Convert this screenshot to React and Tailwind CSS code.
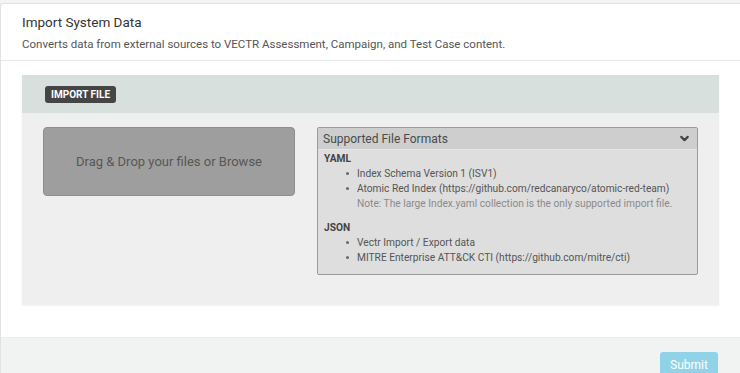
import { ChevronDown } from "lucide-react";

const Bullet = ({ children }) => (
  <li className="flex items-center">
    <span className="mr-[8px] h-[3px] w-[3px] shrink-0 rounded-full bg-[#666]" />
    <span>{children}</span>
  </li>
);

const App = () => {
  return (
    <div className="h-[373px] w-[740px] overflow-hidden bg-[#f4f4f4] pt-[3px] font-['Roboto',sans-serif]">
      <div className="flex h-full flex-col rounded-tl-[3px] border-l border-t border-[#e2e2e2] bg-white">
        {/* Header */}
        <div className="h-[57px] shrink-0 border-b border-[#e8e8e8] px-[21px] pt-[8px]">
          <h3 className="text-[13.5px] leading-[20px] text-[#333]">Import System Data</h3>
          <p className="mt-[5px] text-[11.5px] leading-[14px] text-[#555]">
            Converts data from external sources to VECTR Assessment, Campaign, and Test Case content.
          </p>
        </div>

        {/* Body */}
        <div className="shrink-0 px-[21px] pt-[14px]">
          <div className="w-[697px] shadow-[0_1px_2px_rgba(0,0,0,0.06)]">
            <div className="flex h-[38px] items-center bg-[#d8e0dd] px-[23px]">
              <span className="rounded-[3px] bg-[#454545] px-[6px] text-[10px] font-bold leading-[17px] text-white">
                IMPORT FILE
              </span>
            </div>
            <div className="flex h-[192px] gap-[22px] bg-[#efefef] px-[21px] pt-[14px]">
              <div className="flex h-[69px] w-[252px] items-center justify-center rounded-[4px] border border-[#8e8e8e] bg-[#9e9e9e] text-[13px] text-[#575757]">
                Drag &amp; Drop your files or Browse
              </div>
              <div className="h-[148px] w-[381px] rounded-[2px] border border-[#9b9b9b] bg-[#dedede] text-[10.2px] text-[#555]">
                <div className="flex h-[22px] items-center justify-between border-b border-[#e6e6e6] bg-[#cecece] pl-[5px] pr-[6px]">
                  <span className="text-[12px] text-[#4a4a4a]">Supported File Formats</span>
                  <ChevronDown className="h-[13px] w-[13px] text-[#444]" strokeWidth={4} />
                </div>
                <div className="px-[6px] pt-[1px] leading-[15px]">
                  <div className="font-bold text-[#444]">YAML</div>
                  <ul className="pl-[22px]">
                    <Bullet>Index Schema Version 1 (ISV1)</Bullet>
                    <Bullet>Atomic Red Index (https://github.com/redcanaryco/atomic-red-team)</Bullet>
                  </ul>
                  <div className="pl-[33px] text-[#8a8a8a]">
                    Note: The large Index.yaml collection is the only supported import file.
                  </div>
                  <div className="mt-[9px] font-bold text-[#444]">JSON</div>
                  <ul className="pl-[22px]">
                    <Bullet>Vectr Import / Export data</Bullet>
                    <Bullet>MITRE Enterprise ATT&amp;CK CTI (https://github.com/mitre/cti)</Bullet>
                  </ul>
                </div>
              </div>
            </div>
          </div>
        </div>

        {/* Footer */}
        <div className="mt-[32px] flex flex-1 justify-end border-t border-[#ececec] bg-[#f1f3f3] pr-[22px] pt-[14px]">
          <button className="h-[26px] w-[58px] rounded-t-[3px] bg-[#90d3e8] text-[12px] text-white">
            Submit
          </button>
        </div>
      </div>
    </div>
  );
};

export default App;
